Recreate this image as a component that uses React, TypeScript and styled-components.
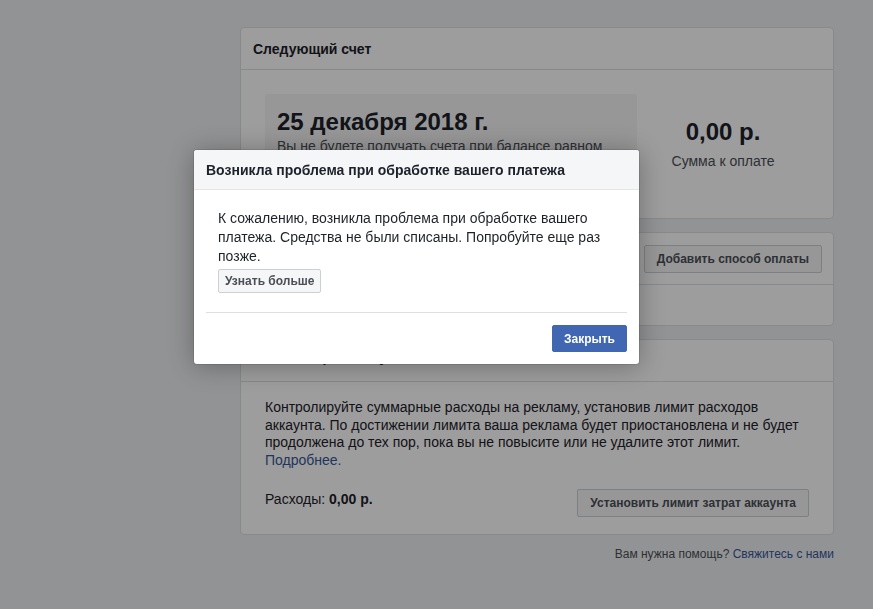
import React from "react";
import styled, { createGlobalStyle } from "styled-components";

const Global = createGlobalStyle`
  html, body { margin: 0; padding: 0; }
  body {
    background: #eeeff1;
    font-family: "Liberation Sans", Arial, Helvetica, sans-serif;
    color: #1d2129;
    width: 873px;
    height: 609px;
    overflow: hidden;
  }
  * { box-sizing: border-box; }
`;

const Page = styled.div`
  width: 873px;
  height: 609px;
  padding: 27px 0 0 240px;
`;

const Column = styled.div`
  width: 594px;
  display: flex;
  flex-direction: column;
  gap: 13px;
`;

const Card = styled.section`
  background: #fff;
  border: 1px solid #dddfe2;
  border-radius: 4px;
`;

const CardHeader = styled.header<{ $raise?: number }>`
  height: 42px;
  display: flex;
  align-items: center;
  padding: 0 12px ${(p) => p.$raise ?? 0}px;
  border-bottom: 1px solid #dddfe2;
  font-size: 14px;
  font-weight: bold;
  color: #1d2129;
`;

const InvoiceBody = styled.div`
  display: flex;
  padding: 24px;
`;

const DateBox = styled.div`
  width: 372px;
  height: 100px;
  background: #f5f6f7;
  border-radius: 2px;
  padding: 13px 12px;
`;

const DateTitle = styled.div`
  font-size: 24px;
  font-weight: bold;
  line-height: 30px;
  color: #1d2129;
`;

const DateNote = styled.div`
  font-size: 14px;
  line-height: 18px;
  color: #4b4f56;
`;

const AmountCol = styled.div`
  flex: 1;
  display: flex;
  flex-direction: column;
  align-items: center;
  justify-content: center;
  gap: 6px;
`;

const Amount = styled.div`
  font-size: 24px;
  font-weight: bold;
  line-height: 28px;
`;

const AmountLabel = styled.div`
  font-size: 14px;
  line-height: 18px;
  color: #4b4f56;
`;

const Row = styled.div<{ $h: number; $divider?: boolean }>`
  height: ${(p) => p.$h}px;
  display: flex;
  align-items: center;
  justify-content: space-between;
  padding: 0 11px 0 12px;
  border-bottom: ${(p) => (p.$divider ? "1px solid #dddfe2" : "none")};
  font-size: 14px;
  font-weight: bold;
`;

const Button = styled.button<{ $primary?: boolean; $h?: number }>`
  height: ${(p) => p.$h ?? 28}px;
  padding: 0 12px;
  border-radius: 2px;
  font-family: inherit;
  font-size: 12px;
  font-weight: bold;
  cursor: pointer;
  border: 1px solid ${(p) => (p.$primary ? "#4267b2" : "#ccd0d5")};
  background: ${(p) => (p.$primary ? "#4267b2" : "#f5f6f7")};
  color: ${(p) => (p.$primary ? "#fff" : "#4b4f56")};
`;

const LimitBody = styled.div`
  padding: 17px 24px 17px;
  font-size: 14px;
  line-height: 17.5px;
  color: #1d2129;
`;

const Link = styled.a`
  color: #365899;
  text-decoration: none;
`;

const SpendRow = styled.div`
  margin-top: 20px;
  display: flex;
  justify-content: space-between;
  align-items: flex-start;
`;

const Spend = styled.div`
  line-height: 20px;
  b { font-weight: bold; }
`;

const Help = styled.div`
  width: 594px;
  margin-top: 12px;
  text-align: right;
  font-size: 12px;
  line-height: 14px;
  color: #4b4f56;
`;

const Overlay = styled.div`
  position: fixed;
  inset: 0;
  background: rgba(0, 0, 0, 0.385);
`;

const Dialog = styled.div`
  position: absolute;
  left: 194px;
  top: 150px;
  width: 445px;
  background: #fff;
  border-radius: 3px;
  box-shadow: 0 2px 26px rgba(0, 0, 0, 0.3), 0 0 0 1px rgba(0, 0, 0, 0.1);
  overflow: hidden;
`;

const DialogHeader = styled.div`
  height: 40px;
  background: #f5f6f7;
  border-bottom: 1px solid #e5e5e5;
  display: flex;
  align-items: center;
  padding: 0 12px;
  font-size: 14px;
  font-weight: bold;
  color: #1d2129;
`;

const DialogBody = styled.div`
  padding: 19px 12px 19px 24px;
  font-size: 14px;
  line-height: 19px;
  color: #1d2129;
  display: flex;
  flex-direction: column;
  align-items: flex-start;
`;

const MoreButton = styled(Button)`
  margin-top: 3px;
  padding: 0 6px;
`;

const CloseButton = styled(Button)`
  padding: 0 11px;
`;

const Divider = styled.hr`
  margin: 0 12px;
  border: none;
  border-top: 1px solid #dddfe2;
`;

const DialogFooter = styled.div`
  display: flex;
  justify-content: flex-end;
  padding: 12px;
`;

export default function App() {
  return (
    <>
      <Global />
      <Page>
        <Column>
          <Card>
            <CardHeader>Следующий счет</CardHeader>
            <InvoiceBody>
              <DateBox>
                <DateTitle>25 декабря 2018 г.</DateTitle>
                <DateNote>Вы не будете получать счета при балансе равном нулю.</DateNote>
              </DateBox>
              <AmountCol>
                <Amount>0,00 р.</Amount>
                <AmountLabel>Сумма к оплате</AmountLabel>
              </AmountCol>
            </InvoiceBody>
          </Card>
          <Card>
            <Row $h={52} $divider>
              <span>Способы оплаты</span>
              <Button>Добавить способ оплаты</Button>
            </Row>
            <Row $h={40} />
          </Card>
          <Card>
            <CardHeader $raise={8}>Лимит затрат аккаунта</CardHeader>
            <LimitBody>
              Контролируйте суммарные расходы на рекламу, установив лимит расходов аккаунта. По
              достижении лимита ваша реклама будет приостановлена и не будет продолжена до тех
              пор, пока вы не повысите или не удалите этот лимит.
              <br />
              <Link href="#">Подробнее.</Link>
              <SpendRow>
                <Spend>
                  Расходы: <b>0,00 р.</b>
                </Spend>
                <Button>Установить лимит затрат аккаунта</Button>
              </SpendRow>
            </LimitBody>
          </Card>
        </Column>
        <Help>
          Вам нужна помощь? <Link href="#">Свяжитесь с нами</Link>
        </Help>
      </Page>
      <Overlay />
      <Dialog role="dialog">
        <DialogHeader>Возникла проблема при обработке вашего платежа</DialogHeader>
        <DialogBody>
          <div>
            К сожалению, возникла проблема при обработке вашего платежа. Средства не были
            списаны. Попробуйте еще раз позже.
          </div>
          <MoreButton $h={24}>Узнать больше</MoreButton>
        </DialogBody>
        <Divider />
        <DialogFooter>
          <CloseButton $primary $h={27}>Закрыть</CloseButton>
        </DialogFooter>
      </Dialog>
    </>
  );
}
